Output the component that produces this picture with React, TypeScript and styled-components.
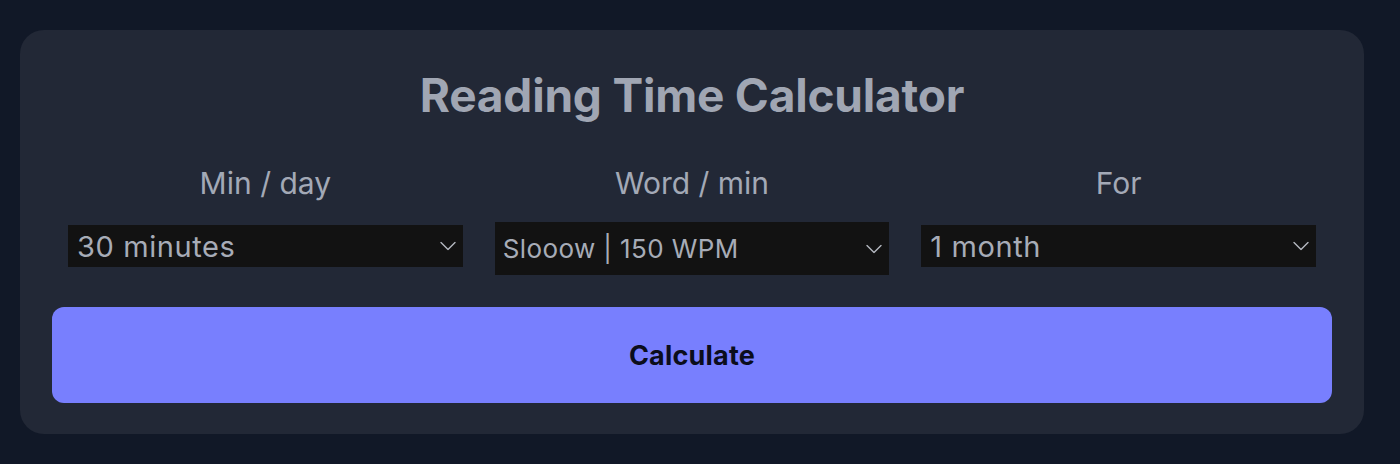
import React from "react";
import styled, { createGlobalStyle } from "styled-components";

const GlobalStyle = createGlobalStyle`
  html, body {
    margin: 0;
    padding: 0;
    background-color: #111827;
  }
  body {
    font-family: Inter, "Noto Sans", sans-serif;
  }
`;

const fields = [
  {
    label: "Min / day",
    value: "30",
    small: false,
    options: [
      { value: "15", text: "15 minutes" },
      { value: "30", text: "30 minutes" },
      { value: "60", text: "1 hour" },
    ],
  },
  {
    label: "Word / min",
    value: "150",
    small: true,
    options: [
      { value: "150", text: "Slooow | 150 WPM" },
      { value: "250", text: "Average | 250 WPM" },
      { value: "400", text: "Fast | 400 WPM" },
    ],
  },
  {
    label: "For",
    value: "1m",
    small: false,
    options: [
      { value: "1w", text: "1 week" },
      { value: "1m", text: "1 month" },
      { value: "1y", text: "1 year" },
    ],
  },
];

function Chevron() {
  return (
    <svg width="16" height="9" viewBox="0 0 16 9" fill="none">
      <path
        d="M1 1l7 7 7-7"
        stroke="#b4b8c0"
        strokeWidth="1.4"
        strokeLinecap="round"
        strokeLinejoin="round"
      />
    </svg>
  );
}

export default function App() {
  const [values, setValues] = React.useState(fields.map((f) => f.value));

  return (
    <>
      <GlobalStyle />
      <Page>
        <Card>
          <Title>Reading Time Calculator</Title>
          <Fields>
            {fields.map((field, idx) => (
              <Field key={field.label}>
                <Label>{field.label}</Label>
                <SelectWrap $small={field.small}>
                  <Select
                    $small={field.small}
                    value={values[idx]}
                    onChange={(e) => {
                      const next = [...values];
                      next[idx] = e.target.value;
                      setValues(next);
                    }}>
                    {field.options.map((o) => (
                      <option key={o.value} value={o.value}>
                        {o.text}
                      </option>
                    ))}
                  </Select>
                  <ArrowIcon>
                    <Chevron />
                  </ArrowIcon>
                </SelectWrap>
              </Field>
            ))}
          </Fields>
          <CalcButton>Calculate</CalcButton>
        </Card>
      </Page>
    </>
  );
}

const Page = styled.div`
  padding: 30px 36px 30px 20px;
  min-height: 464px;
  box-sizing: border-box;
`;

const Card = styled.div`
  background-color: #222836;
  border-radius: 24px;
  padding: 32px 32px 31px;
  display: flex;
  flex-direction: column;
`;

const Title = styled.h1`
  margin: 0;
  text-align: center;
  font-size: 46px;
  line-height: 66px;
  font-weight: 700;
  color: #a0a6b3;
  letter-spacing: -0.2px;
`;

const Fields = styled.div`
  display: grid;
  grid-template-columns: repeat(3, 1fr);
  margin-top: 35px;
`;

const Field = styled.div`
  display: flex;
  flex-direction: column;
  align-items: stretch;
  padding: 0 16px;
`;

const Label = styled.div`
  text-align: center;
  font-size: 30px;
  line-height: 40px;
  color: #a3a9b6;
  margin-bottom: 22px;
`;

const SelectWrap = styled.div<{ $small: boolean }>`
  position: relative;
  margin-top: ${(p) => (p.$small ? "-3px" : "0")};
  margin-bottom: ${(p) => (p.$small ? "-8px" : "0")};
`;

const Select = styled.select<{ $small: boolean }>`
  appearance: none;
  -webkit-appearance: none;
  width: 100%;
  display: block;
  border: none;
  border-radius: 0;
  outline: none;
  margin: 0;
  background-color: #121212;
  color: #a7acb7;
  font-family: Inter, "Noto Sans", sans-serif;
  font-size: ${(p) => (p.$small ? "26px" : "29px")};
  letter-spacing: ${(p) => (p.$small ? "0.4px" : "0.6px")};
  height: ${(p) => (p.$small ? "53px" : "42px")};
  padding: 0 40px 0 ${(p) => (p.$small ? "8px" : "9px")};
`;

const ArrowIcon = styled.span`
  position: absolute;
  right: 7px;
  top: 50%;
  transform: translateY(-50%);
  display: flex;
  pointer-events: none;
`;

const CalcButton = styled.button`
  margin-top: 40px;
  height: 96px;
  border: none;
  border-radius: 12px;
  background-color: #787ffe;
  color: #0b0d1c;
  font-family: Inter, "Noto Sans", sans-serif;
  font-size: 27px;
  letter-spacing: 0.2px;
  font-weight: 700;
  cursor: pointer;
`;
